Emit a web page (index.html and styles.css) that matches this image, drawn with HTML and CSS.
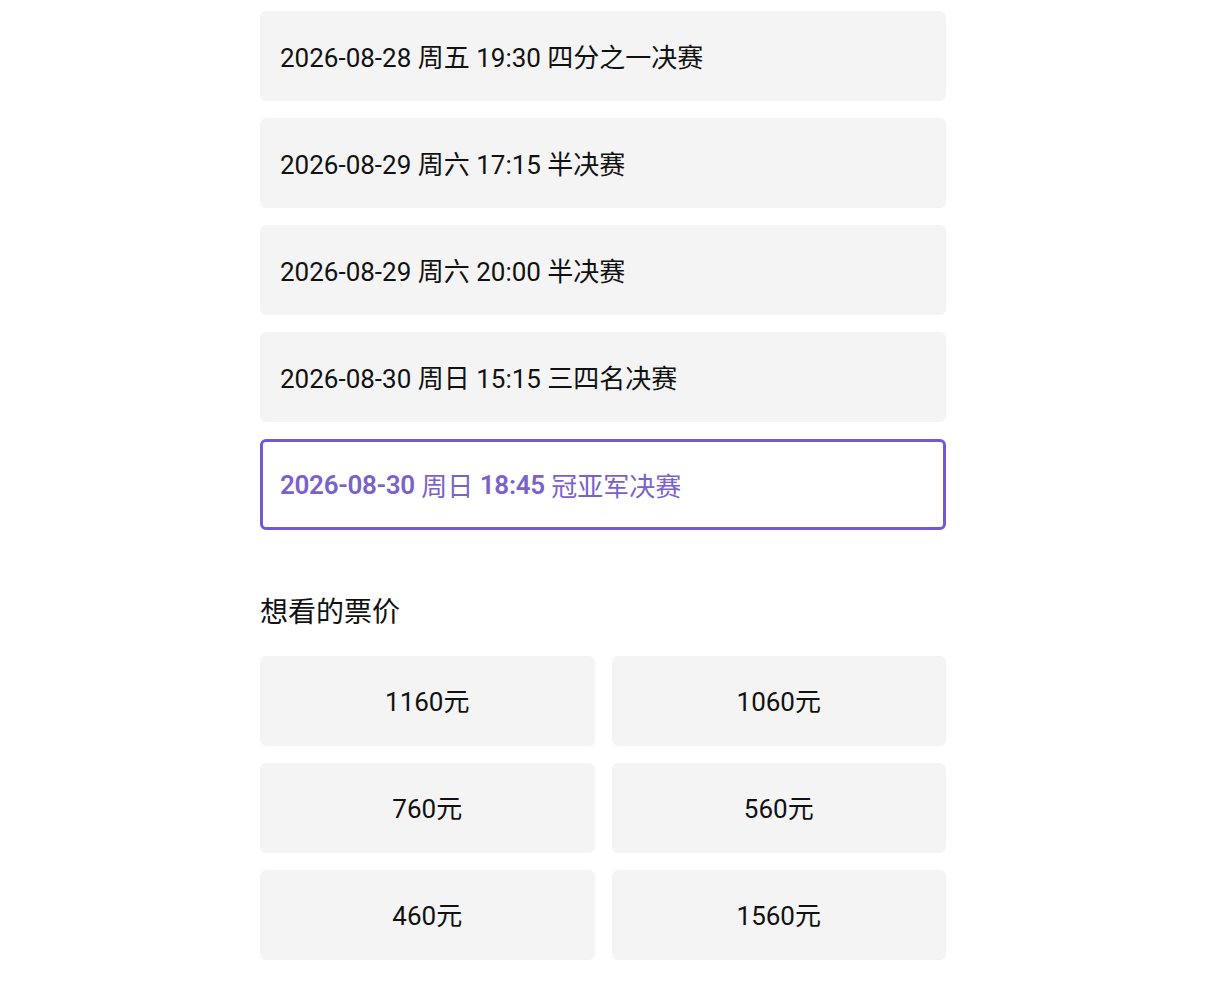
FILE: index.html
```html
<!DOCTYPE html>
<html lang="zh-CN">
<head>
    <meta charset="UTF-8">
    <meta name="viewport" content="width=device-width, initial-scale=1.0">
    <title>选择场次与票价</title>
    <link rel="stylesheet" href="styles.css">
</head>
<body>
    <div class="picker">
        <div class="session-list">
            <div class="session">2026-08-28 周五 19:30 四分之一决赛</div>
            <div class="session">2026-08-29 周六 17:15 半决赛</div>
            <div class="session">2026-08-29 周六 20:00 半决赛</div>
            <div class="session">2026-08-30 周日 15:15 三四名决赛</div>
            <div class="session active"><b>2026-08-30</b> 周日 <b>18:45</b> 冠亚军决赛</div>
        </div>

        <h2 class="section-title">想看的票价</h2>

        <div class="price-grid">
            <div class="price">1160元</div>
            <div class="price">1060元</div>
            <div class="price">760元</div>
            <div class="price">560元</div>
            <div class="price">460元</div>
            <div class="price">1560元</div>
        </div>
    </div>
</body>
</html>
```

FILE: styles.css
```css
body {
    margin: 0;
    padding: 0;
    background-color: #fff;
    font-family: Roboto, "Noto Sans CJK SC", sans-serif;
    color: #111;
}

.picker {
    width: 686px;
    margin: 0 auto;
    padding-top: 11px;
}

.session-list {
    display: flex;
    flex-direction: column;
    gap: 17px;
}

.session {
    box-sizing: border-box;
    height: 90px;
    display: flex;
    align-items: center;
    padding: 0 20px 2px;
    background-color: #f4f4f4;
    border-radius: 6px;
    font-size: 26px;
    white-space: pre;
}

.session.active {
    background-color: #fff;
    border: 3px solid #7459d3;
    padding-left: 17px;
    padding-bottom: 0;
    color: #7a62cc;
    height: 91px;
}

.session.active b {
    font-weight: 600;
    letter-spacing: -0.3px;
}

.section-title {
    margin: 63px 0 23px;
    font-size: 28px;
    line-height: 40px;
    font-weight: 400;
}

.price-grid {
    display: grid;
    grid-template-columns: 1fr 1fr;
    gap: 17px;
}

.price {
    box-sizing: border-box;
    height: 90px;
    display: flex;
    align-items: center;
    justify-content: center;
    padding-bottom: 3px;
    background-color: #f4f4f4;
    border-radius: 6px;
    font-size: 26px;
}
```
